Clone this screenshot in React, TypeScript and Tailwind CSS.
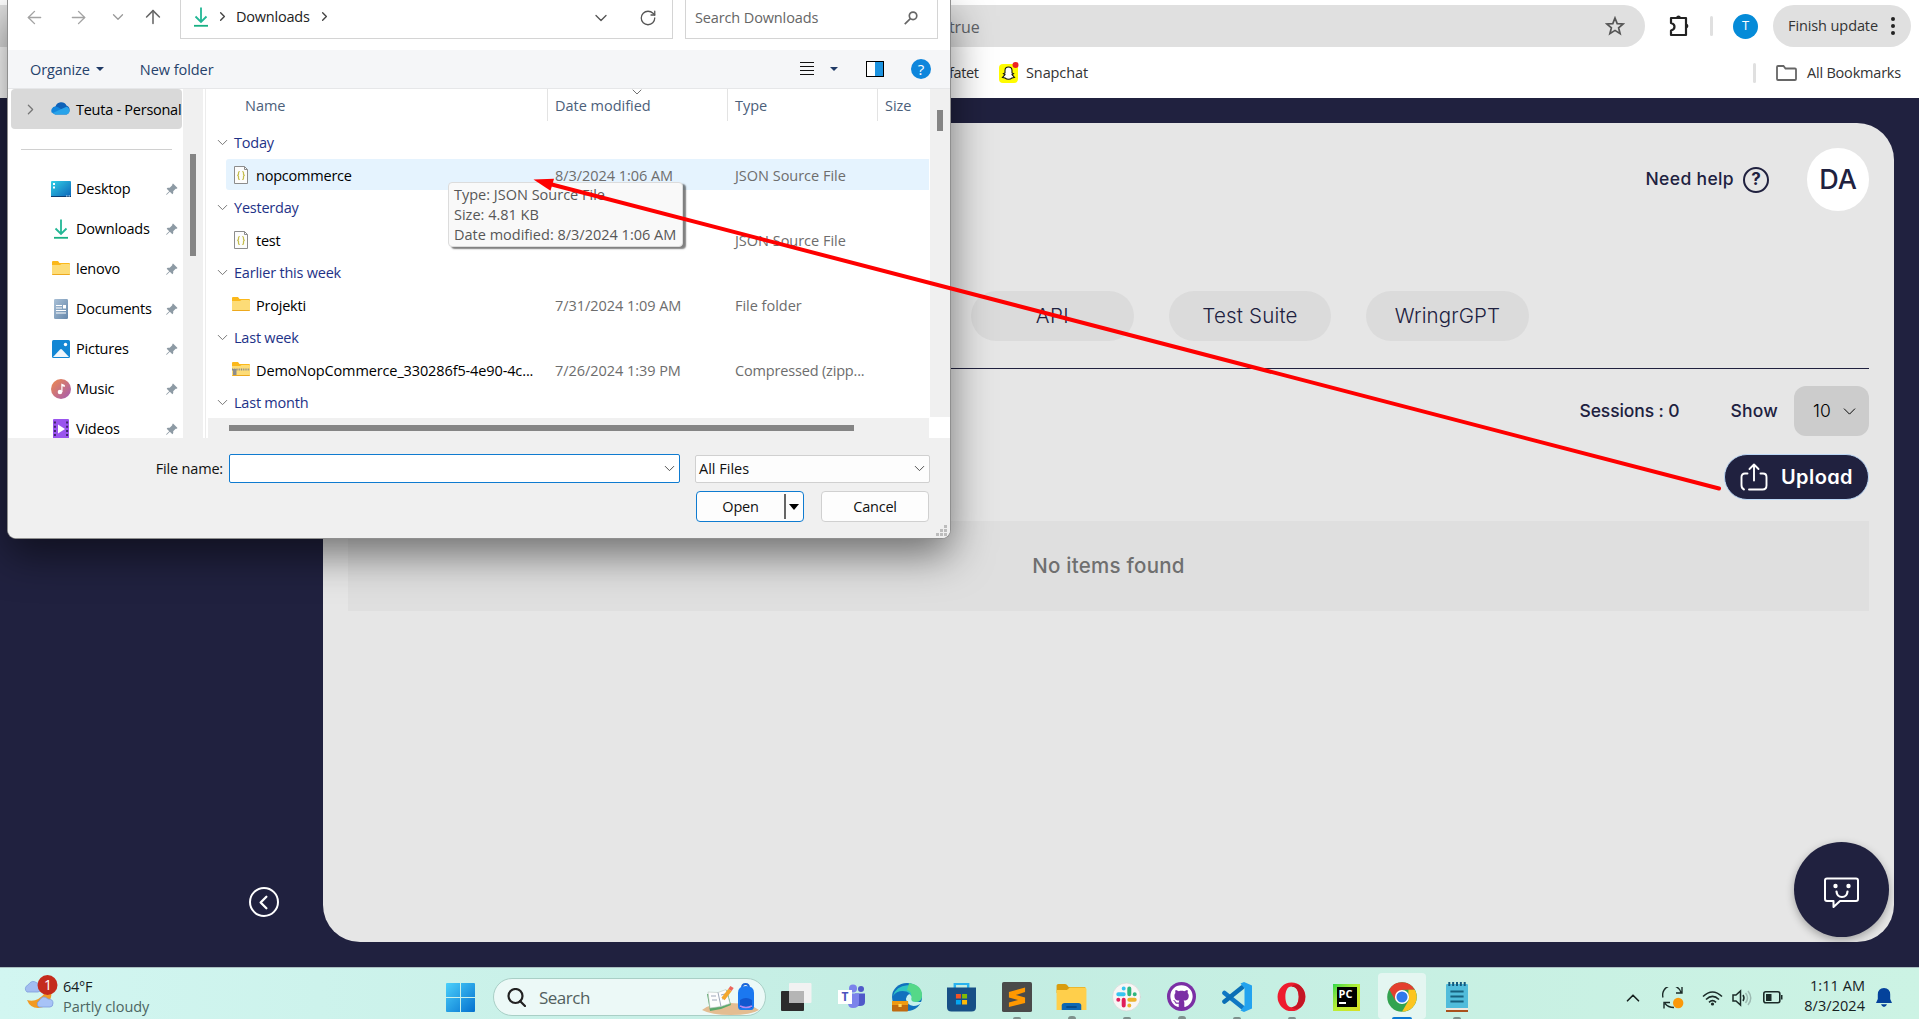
import React from "react";
import { ArrowLeft, ArrowRight, ArrowUp, ChevronDown, ChevronLeft, ChevronRight, ChevronUp, RotateCw } from "lucide-react";
import { BsPinAngleFill } from "react-icons/bs";
import { FaGithub } from "react-icons/fa";

function DownloadIcon() {
  return (
    <svg width="20" height="20" viewBox="0 0 20 20" fill="none" stroke="#1fb98f" strokeWidth="1.8">
      <path d="M10 0.5V14M4.5 9.5l5.5 5.5 5.5-5.5" stroke="#22b795" />
      <path d="M3 18.8h14" stroke="#18b083" />
    </svg>
  );
}

function FolderIcon({ zip = false }: { zip?: boolean }) {
  return (
    <svg width="20" height="20" viewBox="0 0 20 20">
      <path d="M1 3q0-1 1-1h5l1.5 2H18q1 0 1 1v10H1z" fill="#fbb81b" />
      <path d="M1 6h8l1.500-1H18q1 0 1 1v9q0 1-1 1H2q-1 0-1-1z" fill="#fddc77" />
      <path d="M1 15h18q0 1-1 1H2q-1 0-1-1z" fill="#eda91e" />
      {zip && (
        <>
          <path d="M1 9.500h18" stroke="#8a8a8a" strokeWidth="2" strokeDasharray="1 .8" />
          <rect x="2" y="9" width="3.500" height="6" fill="#8d8d8d" />
        </>
      )}
    </svg>
  );
}

function JsonIcon() {
  return (
    <svg width="14" height="18" viewBox="0 0 14 18" fill="none">
      <path d="M.5.5h10l3 3v14H.5z" fill="#fcfcfc" stroke="#8c8c8c" />
      <path d="M10.500.5v3h3" stroke="#8c8c8c" />
      <path d="M5.800 5.500q-1.300 0-1.300 1.300v1.500L3.700 9.300l.8 1v1.900q0 1.300 1.300 1.300M8.200 5.500q1.300 0 1.300 1.300v1.500l.8 1-.8 1v1.900q0 1.300-1.300 1.300" stroke="#c4bd4c" strokeWidth="1.200" />
    </svg>
  );
}

function CloudIcon() {
  return (
    <svg width="20" height="20" viewBox="0 0 20 20">
      <path d="M4.500 7.500A6 6 0 0 1 15.500 6.500a4.800 4.800 0 0 1 0 9H4.500a4.200 4.200 0 0 1 0-8z" fill="#0f62b8" />
      <path d="M1 14a4.200 4.200 0 0 1 3.500-6.500c2 0 4 1.500 6.500 3.500z" fill="#1285dc" />
      <path d="M1.500 14 11 9.800l4.500-2a4 4 0 0 1 0 7.700H4.500A4 4 0 0 1 1.500 14z" fill="#28a3ea" />
    </svg>
  );
}

function DesktopIcon() {
  return (
    <svg width="20" height="20" viewBox="0 0 20 20">
      <defs>
        <linearGradient id="desk" x2="1" y2="1">
          <stop stopColor="#33d0e6" />
          <stop offset="1" stopColor="#0b62b8" />
        </linearGradient>
      </defs>
      <rect y="2" width="20" height="16" rx="1" fill="url(#desk)" />
      <path d="M0 17h20v1H0z" fill="#0c3c71" />
      <path d="M2 4h2v2H2zM2 7.500h2v2H2z" fill="#fff" />
      <path d="M15 17h1.500M17.500 17h1.500" stroke="#fff" strokeWidth=".8" />
    </svg>
  );
}

function DocumentIcon() {
  return (
    <svg width="20" height="20" viewBox="0 0 20 20">
      <defs>
        <linearGradient id="doc" x2="1" y2="1">
          <stop stopColor="#a9c0d6" />
          <stop offset="1" stopColor="#6587ab" />
        </linearGradient>
      </defs>
      <rect x="3" width="14" height="20" rx="1.200" fill="url(#doc)" />
      <path d="M5 6.500h6M5 9h6M5 11.500h10M5 14h10" stroke="#fff" strokeWidth="1.200" />
      <rect x="12" y="6" width="3" height="3.500" fill="#fff" />
    </svg>
  );
}

function PicturesIcon() {
  return (
    <svg width="20" height="20" viewBox="0 0 20 20">
      <rect x="1" y="1" width="18" height="18" rx="1.500" fill="#1387d4" />
      <path d="m2 18 7-7.500q1-1 2 0l7 7.500z" fill="#f1f7fc" />
      <circle cx="14.500" cy="5.500" r="1.700" fill="#fff" />
    </svg>
  );
}

function MusicIcon() {
  return (
    <svg width="20" height="20" viewBox="0 0 20 20">
      <defs>
        <linearGradient id="mus" x2="1" y2="1">
          <stop stopColor="#f08a4b" />
          <stop offset="1" stopColor="#a35bb5" />
        </linearGradient>
      </defs>
      <circle cx="10" cy="10" r="10" fill="url(#mus)" />
      <circle cx="9" cy="13" r="2.300" fill="#fff" />
      <path d="M10.300 13V4.500l3.500 1.500v2l-2.300-.8V13z" fill="#fff" />
    </svg>
  );
}

function VideosIcon() {
  return (
    <svg width="20" height="20" viewBox="0 0 20 20">
      <rect x="2" y="0" width="16" height="20" rx="1" fill="#9a55ee" />
      <path d="M3.900 2.500V20M16.100 2.500V20" stroke="#3d2468" strokeWidth="2" strokeDasharray="2 2.200" />
      <path d="m7 5.500 7 4.500-7 4.500z" fill="#fff" />
    </svg>
  );
}

const places: { label: string; icon: React.ReactNode }[] = [
  { label: "Desktop", icon: <DesktopIcon /> },
  { label: "Downloads", icon: <DownloadIcon /> },
  { label: "lenovo", icon: <FolderIcon /> },
  { label: "Documents", icon: <DocumentIcon /> },
  { label: "Pictures", icon: <PicturesIcon /> },
  { label: "Music", icon: <MusicIcon /> },
  { label: "Videos", icon: <VideosIcon /> },
];

const groups = [
  { title: "Today", name: "nopcommerce", date: "8/3/2024 1:06 AM", type: "JSON Source File", icon: <JsonIcon />, active: true },
  { title: "Yesterday", name: "test", date: "8/3/2024 1:06 AM", type: "JSON Source File", icon: <JsonIcon /> },
  { title: "Earlier this week", name: "Projekti", date: "7/31/2024 1:09 AM", type: "File folder", icon: <FolderIcon /> },
  { title: "Last week", name: "DemoNopCommerce_330286f5-4e90-4c...", date: "7/26/2024 1:39 PM", type: "Compressed (zipp...", icon: <FolderIcon zip /> },
];

function GroupTitle({ title }: { title: string }) {
  return (
    <div className="flex h-[33px] items-center pl-[6px] tracking-[-0.22px] text-[#1e3287]">
      <ChevronDown className="mr-[3px] h-[17px] w-[17px] text-[#777]" strokeWidth={1.400} />
      {title}
    </div>
  );
}

function FileDialog() {
  return (
    <section className="absolute left-[7px] top-0 flex h-[539px] w-[944px] flex-col overflow-hidden rounded-b-[9px] border border-t-0 border-[#8f8f8f] bg-white text-[14.5px] tracking-[-0.22px] text-[#111] shadow-[0_16px_40px_rgba(0,0,0,0.5)]">
      <div className="flex h-[50px] shrink-0 text-[#555]">
        <div className="flex h-[34px] w-[172px] items-center">
          <ArrowLeft className="ml-[16px] h-[21px] w-[21px] text-[#a3a3a3]" strokeWidth={1.600} />
          <ArrowRight className="ml-[23px] h-[21px] w-[21px] text-[#a3a3a3]" strokeWidth={1.600} />
          <ChevronDown className="ml-[20px] h-[18px] w-[18px] text-[#999]" strokeWidth={1.700} />
          <ArrowUp className="ml-[15px] h-[22px] w-[22px] text-[#666]" strokeWidth={1.700} />
        </div>
        <div className="flex h-[39px] w-[493px] items-center border border-t-0 border-[#d4d4d4] pb-[5px] pl-[10px]">
          <DownloadIcon />
          <ChevronRight className="ml-[4px] h-[15px] w-[15px] text-[#444]" strokeWidth={2.200} />
          <span className="ml-[6px] text-[#222]">Downloads</span>
          <ChevronRight className="ml-[7px] h-[15px] w-[15px] text-[#444]" strokeWidth={2.200} />
          <ChevronDown className="ml-auto mr-[28px] mt-[3px] h-5 w-5" strokeWidth={1.600} />
          <RotateCw className="mr-[15px] mt-[3px] h-[18px] w-[18px]" strokeWidth={1.700} />
        </div>
        <div className="ml-[12px] flex h-[39px] w-[253px] items-center justify-between border border-t-0 border-[#d4d4d4] pb-[3px] pl-[9px] pr-[19px]">
          <span className="tracking-[-0.13px] text-[#666]">Search Downloads</span>
          <svg width="14" height="14" viewBox="0 0 15 15" fill="none" stroke="#666" strokeWidth="1.800">
            <circle cx="9.700" cy="5.200" r="4" />
            <path d="M6.800 8.200.8 14" />
          </svg>
        </div>
      </div>

      <div className="flex h-[39px] shrink-0 items-center border-b border-[#e6e7e9] bg-[#f5f6f8] text-[#26426b]">
        <span className="ml-[22px] mt-[2px] tracking-[-0.1px]">Organize</span>
        <span className="ml-[6px] border-x-4 border-t-4 border-x-transparent border-t-[#203a66]" />
        <span className="ml-[36px] mt-[2px] tracking-[-0.05px]">New folder</span>
        <svg className="ml-auto" width="14" height="14" viewBox="0 0 14 14" stroke="#111" strokeWidth="1">
          <path d="M0 .5h14M0 4.500h14M0 8.500h14M0 12.500h14" />
        </svg>
        <span className="ml-[16px] border-x-4 border-t-4 border-x-transparent border-t-[#203a66]" />
        <span className="ml-[28px] flex h-[16px] w-[18px] justify-end border border-black bg-white">
          <span className="w-2 bg-[#1c93e0]" />
        </span>
        <span className="ml-[27px] mr-[19px] flex h-5 w-5 items-center justify-center rounded-full bg-[#0e86dc] text-[15px] text-white">?</span>
      </div>

      <div className="flex h-[349px] shrink-0">
        <div className="h-full w-[175px] shrink-0 overflow-hidden pl-[3px] text-black">
          <div className="flex h-10 w-[171px] items-center overflow-hidden whitespace-nowrap rounded-sm bg-[#d9d9d9]">
            <ChevronRight className="ml-[11px] h-[17px] w-[17px] shrink-0 text-[#777]" strokeWidth={1.800} />
            <span className="ml-[12px] mr-[5px] shrink-0"><CloudIcon /></span>
            <span className="mt-px tracking-[-0.26px]">Teuta - Personal</span>
          </div>
          <div className="ml-[10px] mt-5 h-px w-[151px] bg-[#d0d0d0]" />
          <div className="mt-[19px]">
            {places.map((p) => (
              <div key={p.label} className="flex h-10 items-center pl-10">
                {p.icon}
                <span className="ml-[5px]">{p.label}</span>
                <BsPinAngleFill className="ml-auto mr-[5px] h-[13px] w-[13px] text-[#8d9aa4]" />
              </div>
            ))}
          </div>
        </div>
        <div className="h-full w-[20px] shrink-0 bg-[#f0f0f0] pl-[7px] pt-[65px]">
          <div className="h-[102px] w-[6px] bg-[#858585]" />
        </div>
        <div className="ml-[2px] h-full w-[3px] border-l border-[#ececec]" />
        <div className="flex h-full w-[722px] shrink-0 flex-col">
          <div className="relative flex h-8 items-center tracking-[-0.02px] text-[#4c607a]">
            <span className="ml-[37px] mt-[2px] w-[302px]">Name</span>
            <span className="flex h-full w-[180px] items-center border-l border-[#e3e3e3] pl-[7px] pt-[2px]">Date modified</span>
            <span className="flex h-full w-[150px] items-center border-l border-[#e3e3e3] pl-[7px] pt-[2px]">Type</span>
            <span className="flex h-full items-center border-l border-[#e3e3e3] pl-[7px] pt-[2px]">Size</span>
            <ChevronDown className="absolute left-[421px] top-[-5px] h-[16px] w-[16px] text-[#666]" strokeWidth={1.400} />
          </div>
          <div className="mt-[5px] h-[292px] overflow-hidden">
            {groups.map((g) => (
              <div key={g.title} className="h-[65px]">
                <GroupTitle title={g.title} />
                <div className={g.active ? "ml-[18px] flex h-[31px] w-[703px] items-center rounded-l-[3px] bg-[#e5f3fe]" : "ml-[18px] flex h-[31px] w-[703px] items-center"}>
                  <span className="ml-[5px] flex w-5 justify-center">{g.icon}</span>
                  <span className={g.name.length > 20 ? "ml-[5px] mt-[2px] w-[299px] whitespace-nowrap tracking-[-0.12px] text-black" : "ml-[5px] mt-[2px] w-[299px] text-black"}>{g.name}</span>
                  <span className="mt-[2px] w-[180px] tracking-[-0.05px] text-[#6d6d6d]">{g.date}</span>
                  <span className={g.type.length > 16 ? "mt-[2px] whitespace-nowrap tracking-[-0.17px] text-[#6d6d6d]" : "mt-[2px] whitespace-nowrap tracking-[-0.02px] text-[#6d6d6d]"}>{g.type}</span>
                </div>
              </div>
            ))}
            <GroupTitle title="Last month" />
          </div>
          <div className="mt-auto flex h-5 w-[721px] items-center bg-[#f0f0f0] pl-[21px]">
            <div className="h-[6px] w-[625px] bg-[#858585]" />
          </div>
        </div>
        <div className="h-[328px] w-[20px] bg-[#f0f0f0] pl-[7px] pt-[21px]">
          <div className="h-[21px] w-[6px] bg-[#858585]" />
        </div>
      </div>

      <div className="flex flex-1 flex-col bg-[#f0f0f0] pt-4">
        <div className="flex h-[29px] items-center">
          <span className="w-[215px] text-right tracking-[-0.18px]">File name:</span>
          <span className="ml-[6px] flex h-[29px] w-[451px] items-center justify-end rounded-[2px] border border-[#0f7bd0] bg-white pr-px">
            <ChevronDown className="h-[17px] w-[17px] text-[#444]" strokeWidth={1.300} />
          </span>
          <span className="ml-[15px] flex h-7 w-[235px] items-center justify-between rounded-[2px] border border-[#d0d0d0] bg-[#fdfdfd] pl-[3px] pr-px tracking-[0px]">
            All Files
            <ChevronDown className="h-[17px] w-[17px] text-[#444]" strokeWidth={1.300} />
          </span>
        </div>
        <div className="mt-[8px] flex h-[31px] pl-[688px]">
          <span className="flex w-[108px] items-center rounded-[4px] border border-[#0f7bd0] bg-[#fdfdfd]">
            <span className="w-[87px] text-center">Open</span>
            <span className="h-[25px] w-[2px] bg-[#666]" />
            <span className="ml-[3px] border-x-[5px] border-t-[6px] border-x-transparent border-t-black" />
          </span>
          <span className="ml-[17px] flex w-[108px] items-center justify-center rounded-[4px] border border-[#d0d0d0] bg-[#fdfdfd]">Cancel</span>
        </div>
        <svg className="ml-auto mr-[2px] mt-[3px]" width="12" height="12" viewBox="0 0 12 12" fill="#bdbdbd">
          <path d="M8 0h3v3H8zM4 4h3v3H4zM8 4h3v3H8zM0 8h3v3H0zM4 8h3v3H4zM8 8h3v3H8z" />
        </svg>
      </div>
    </section>
  );
}

function BrowserChrome() {
  return (
    <header className="h-[98px] shrink-0 bg-white text-[14.5px] tracking-[-0.1px] text-[#333]">
      <div className="flex h-[52px] items-center">
        <div className="flex h-[42px] w-[1645px] items-center justify-between rounded-r-full bg-[#e0e0e0] pl-[949px] pr-[20px] text-[16px] text-[#5f6368]">
          <span className="mt-px">true</span>
          <svg width="20" height="20" viewBox="0 0 20 20" fill="none" stroke="#555" strokeWidth="1.700">
            <path d="m10 2 2.200 5.600 6 .4-4.600 3.800 1.500 5.900L10 14.400l-5.100 3.300 1.500-5.900L1.800 8l6-.4z" />
          </svg>
        </div>
        <svg className="ml-[23px]" width="23" height="22" viewBox="0 0 23 22" fill="none" stroke="#222" strokeWidth="2.200">
          <path d="M3 3h15v17H3v-4.500q3.500-1 3.500-3.800T3 8z" strokeLinejoin="round" />
          <path d="M8 2.500a2.600 2.600 0 0 1 5 0zM18.500 8.500a2.600 2.600 0 0 1 0 5z" fill="#222" strokeWidth="0" />
        </svg>
        <span className="ml-[19px] h-5 w-[3px] rounded bg-[#e0e0e0]" />
        <span className="ml-5 flex h-[25px] w-[25px] items-center justify-center rounded-full bg-[#058bd8] text-[13px] text-white">T</span>
        <div className="ml-[15px] flex h-[42px] w-[138px] items-center rounded-full bg-[#e0e0e0] pl-[15px] text-[14.5px] text-[#333]">
          <span className="whitespace-nowrap">Finish update</span>
          <svg className="ml-[13px] shrink-0" width="4" height="18" viewBox="0 0 4 18" fill="#222">
            <circle cx="2" cy="2" r="2" /><circle cx="2" cy="9" r="2" /><circle cx="2" cy="16" r="2" />
          </svg>
        </div>
      </div>
      <div className="flex h-[42px] items-center pl-[949px]">
        <span className="w-[50px] tracking-[-0.35px]">fatet</span>
        <svg width="20" height="22" viewBox="0 0 20 22">
          <rect y="2" width="19" height="19" rx="4" fill="#fffc00" />
          <path d="M9.500 5q3.500 0 3.500 3.500V11l1.500.7-1.500 1 2.500 2.800-2.500.5q-1.500 1.300-3.500 1.300T6 16l-2.500-.5L6 12.700l-1.500-1L6 11V8.500Q6 5 9.500 5z" fill="#fff" stroke="#111" strokeWidth="1.100" />
          <circle cx="16.500" cy="3" r="3" fill="#e22" />
        </svg>
        <span className="ml-[7px]">Snapchat</span>
        <span className="ml-auto h-5 w-[3px] rounded bg-[#e0e0e0]" />
        <svg className="ml-5" width="21" height="16" viewBox="0 0 21 16" fill="none" stroke="#666" strokeWidth="1.800">
          <path d="M1 2q0-1 1-1h5.500l2 2.500H19q1 0 1 1V14q0 1-1 1H2q-1 0-1-1z" />
        </svg>
        <span className="ml-[10px] mr-[18px] tracking-[-0.2px]">All Bookmarks</span>
      </div>
    </header>
  );
}

function Workspace() {
  return (
    <main className="flex h-[869px] shrink-0 bg-[#20213f] font-['Inter',sans-serif] text-[#20213f] [font-feature-settings:'cv11']">
      <aside className="flex w-[323px] flex-col justify-end">
        <span className="mb-[50px] ml-[249px] flex h-[30px] w-[30px] items-center justify-center rounded-full border-2 border-white text-white">
          <ChevronLeft className="mr-[2px] h-[23px] w-[23px]" strokeWidth={2.400} />
        </span>
      </aside>
      <section className="relative mb-[25px] mt-[25px] flex w-[1571px] flex-col rounded-[37px] bg-[#e6e6e6] px-[25px]">
        <div className="mt-[25px] flex h-[63px] items-center justify-end font-medium">
          <span className="text-[17.5px] tracking-[0.350px]">Need help</span>
          <span className="ml-[9px] flex h-[26px] w-[26px] items-center justify-center rounded-full border-2 border-[#20213f] text-[17px] font-bold">?</span>
          <span className="ml-[38px] flex h-[63px] w-[62px] items-center justify-center rounded-full bg-white pt-[2px] text-[27px]">DA</span>
        </div>
        <div className="mt-20 flex gap-[35px] pl-[623px] text-[20.5px] font-light tracking-[0.400px]">
          <span className="flex h-[50px] w-[163px] shrink-0 items-center justify-center rounded-full bg-[#dbdbdb]">API</span>
          <span className="flex h-[50px] w-[162px] shrink-0 items-center justify-center rounded-full bg-[#dbdbdb]">
            <span className="tracking-[0.200px]">Test Suite</span>
          </span>
          <span className="flex h-[50px] w-[163px] shrink-0 items-center justify-center rounded-full bg-[#dbdbdb]">
            <span className="tracking-[0.100px]">WringrGPT</span>
          </span>
        </div>
        <div className="mt-[27px] h-px bg-[#20213f]" />
        <div className="mt-[17px] flex h-[50px] items-center justify-end text-[17.5px] font-medium">
          <span className="tracking-[-0.1px]">Sessions : 0</span>
          <span className="ml-[51px] tracking-[0.2px]">Show</span>
          <span className="ml-4 flex h-[50px] w-[75px] items-center rounded-xl bg-[#cccccc] pl-[19px] font-light text-black">
            10
            <ChevronDown className="ml-[8px] h-[21px] w-[21px]" strokeWidth={1.100} />
          </span>
        </div>
        <div className="mt-[18px] flex justify-end">
          <span className="flex h-[46px] w-[145px] items-center rounded-full border border-[#bcd7f5] bg-[#20213f] pl-[15px] text-[20px] font-semibold tracking-[0.400px] text-white">
            <svg width="28" height="28" viewBox="0 0 28 28" fill="none" stroke="#fff" strokeWidth="1.900" strokeLinecap="round" strokeLinejoin="round">
              <path d="M14 17.500V1.500M9.500 6 14 1.500 18.500 6M7.500 10.500H5Q1.500 10.500 1.500 14v8q0 3.500 2.500 4.500M20.500 10.500H23q3.500 0 3.500 3.500v8.500q0 4-4 4H9" />
            </svg>
            <span className="ml-[13px]">Upload</span>
          </span>
        </div>
        <div className="mt-[21px] flex h-[90px] items-center justify-center bg-[#dfdfdf] text-[20.5px] font-medium tracking-[0.250px] text-[#6f6f6f]">No items found</div>
        <button className="absolute bottom-[5px] right-[5px] flex h-[95px] w-[95px] items-center justify-center rounded-full bg-[#20213f] shadow-[0_3px_8px_rgba(0,0,0,0.3)]">
          <svg className="mt-[6px]" width="36" height="32" viewBox="0 0 36 32" fill="none" stroke="#fff" strokeWidth="2" strokeLinejoin="round" strokeLinecap="round">
            <path d="M3 1.500h29q2 0 2 2V22q0 2-2 2H16l-6.500 6v-6H3q-2 0-2-2V3.500q0-2 2-2z" />
            <path d="M12.500 14.500q.5 5.500 5.500 5.500t5.500-5.500" strokeWidth="2.200" />
            <circle cx="11.500" cy="9" r="1.200" fill="#fff" /><circle cx="24.500" cy="9" r="1.200" fill="#fff" />
          </svg>
        </button>
      </section>
    </main>
  );
}

function WeatherIcon() {
  return (
    <svg width="36" height="36" viewBox="0 0 36 36">
      <path d="M22 19q8-2 6 4-2 11-13 11-8 0-11-8 10 3 18-7z" fill="#f29a22" />
      <path d="M4 18a4 4 0 0 1 1-7q4-6 9-2 4 0 4 5 0 4-3 4z" fill="#a2bdf0" stroke="#7f9ddd" strokeWidth=".8" />
      <path d="M16 33a3.500 3.500 0 0 1 0-6q4-7 9-2 5 0 5 4 0 4-3 4z" fill="#a7c3f7" stroke="#7f9ddd" strokeWidth=".8" />
      <circle cx="24.500" cy="11" r="10" fill="#c42b1c" />
    </svg>
  );
}

const apps: { id: string; open?: boolean; focus?: boolean; icon: React.ReactNode }[] = [
  {
    id: "edge",
    icon: (
      <svg width="30" height="30" viewBox="0 0 28 30" preserveAspectRatio="none">
        <circle cx="14" cy="15" r="14" fill="#1171be" />
        <path d="M1 14A14 14 0 0 1 28 13q0 7-6 7-5 0-4-3Q18 9 10 9 4 9 1 14z" fill="#2fc4c4" />
        <path d="M16 1q12 2 12 12 0 7-6 7-5 0-4-3Q19 9 14 8z" fill="#55d888" />
        <path d="M28 20q-3 4-8 4-6-1-7-7 0-3 3-5 3 2 2 5 0 3 4 3t6 0z" fill="#c7f1ec" />
        <rect y="19" width="15" height="10.500" rx="1" fill="#c06b10" />
        <path d="M0 19h15v4H0z" fill="#ee9a12" /><rect x="6" y="22" width="3" height="3" fill="#ffda63" />
      </svg>
    ),
  },
  {
    id: "store",
    icon: (
      <svg width="29" height="30" viewBox="0 0 26 30" preserveAspectRatio="none">
        <path d="M7 6V2h12v4" fill="none" stroke="#29b2ef" strokeWidth="2.200" />
        <path d="M0 5.500h26V25q0 4.500-4 4.500H4q-4 0-4-4.500z" fill="#174f86" />
        <path d="M8 12h4.500v4.500H8z" fill="#f35325" /><path d="M13.500 12H18v4.500h-4.500z" fill="#81bc06" />
        <path d="M8 18h4.500v4.500H8z" fill="#05a6f0" /><path d="M13.500 18H18v4.500h-4.500z" fill="#ffba08" />
      </svg>
    ),
  },
  {
    id: "sublime",
    open: true,
    icon: (
      <svg width="30" height="30" viewBox="0 0 26 30" preserveAspectRatio="none">
        <rect width="26" height="30" rx="1.500" fill="#4a4a4a" />
        <path d="M6 10 20 5.500V10l-8 3 8 2.500V21L6 25v-4.500l8-2.500-8-2.500z" fill="#ff9800" />
      </svg>
    ),
  },
  {
    id: "explorer",
    open: true,
    icon: (
      <svg width="31" height="28" viewBox="0 0 27 28" preserveAspectRatio="none">
        <path d="M.5 2.500Q.5 1 2 1h6q1.500 0 3 3h14.500v6H.5z" fill="#d99c0e" />
        <path d="M.5 7h9l2.500-2.500h13q1.500 0 1.500 1.500v21h-26z" fill="#ffcf4b" />
        <path d="M5 27v-4.500q0-2.500 2.500-2.500h12q2.500 0 2.500 2.500V27z" fill="#0e68b3" />
        <path d="M9 24h9" stroke="#07437d" strokeWidth="1.500" />
      </svg>
    ),
  },
  {
    id: "slack",
    open: true,
    icon: (
      <svg width="29" height="30" viewBox="0 0 29 30" strokeLinecap="round" strokeWidth="4">
        <circle cx="14.500" cy="15" r="14" fill="#f8f6f5" stroke="#ccc" strokeWidth=".5" />
        <path d="M11.700 6.500h.01M6.300 12.200h5.400" stroke="#36c5f0" /><path d="M17.300 6.500v5.700M22.700 12.200h.01" stroke="#2eb67d" />
        <path d="M17.300 17.800h5.400M17.300 23.500h.01" stroke="#ecb22e" /><path d="M6.300 17.800h.01M11.700 17.800v5.700" stroke="#e01e5a" />
      </svg>
    ),
  },
  {
    id: "github",
    open: true,
    icon: (
      <span className="flex h-[29px] w-[29px] items-center justify-center rounded-full bg-[#7b2fa5] text-[23px] text-white">
        <FaGithub />
      </span>
    ),
  },
  {
    id: "vscode",
    open: true,
    icon: (
      <svg width="30" height="30" viewBox="0 0 30 30">
        <path d="M2.500 11 20 25" stroke="#0f78c4" strokeWidth="4.600" strokeLinecap="round" />
        <path d="M2.500 19.500 20 5.500" stroke="#0a6fb6" strokeWidth="4.600" strokeLinecap="round" />
        <path d="M22 0 30 3.500v23L22 30l-3.500-1.500 4-5V6.500l-4-5z" fill="#23a3ef" />
      </svg>
    ),
  },
  {
    id: "opera",
    open: true,
    icon: (
      <svg width="29" height="30" viewBox="0 0 26 30" preserveAspectRatio="none">
        <path fillRule="evenodd" d="M13 .5a12.500 14.300 0 0 1 0 28.600A12.500 14.300 0 0 1 13 .5zm0 4c-4 0-5.500 5-5.500 10.300S9 25.200 13 25.200s6.500-4.500 6.500-10.400S17 4.500 13 4.500z" fill="#ee1c2e" />
        <path d="M13 4.500Q17 .5 21 4a12.500 14.300 0 0 1 0 21.500q-4 3-8-.3 6.500 0 6.500-10.400T13 4.500z" fill="#c41624" />
      </svg>
    ),
  },
  {
    id: "pycharm",
    icon: (
      <span className="flex h-[27px] w-[27px] items-center justify-center bg-gradient-to-br from-[#21d748] via-[#b8ef35] to-[#d9e021]">
        <span className="flex h-[20px] w-[20px] flex-col bg-black pl-[2px] font-['Open_Sans',sans-serif] text-[11px] font-bold leading-[13px] tracking-normal text-white">
          PC
          <span className="mt-[2px] h-[2px] w-[7px] bg-white" />
        </span>
      </span>
    ),
  },
  {
    id: "chrome",
    focus: true,
    icon: (
      <svg width="30" height="30" viewBox="0 0 28 28">
        <circle cx="14" cy="14" r="13.800" fill="#33a350" />
        <path d="M14 .2A13.800 13.800 0 0 1 26 7.200H14L8 17.500 2.100 7A13.800 13.800 0 0 1 14 .2z" fill="#e3402f" />
        <path d="M26 7.200A13.800 13.800 0 0 1 14 27.800L20 17.500l0-10.300z" fill="#fcc520" />
        <circle cx="14" cy="14" r="6.600" fill="#fff" /><circle cx="14" cy="14" r="5.200" fill="#2f79ec" />
      </svg>
    ),
  },
  {
    id: "notepad",
    open: true,
    icon: (
      <svg width="22" height="30" viewBox="0 0 20 30" preserveAspectRatio="none">
        <rect x="0" y="2" width="20" height="26" rx="1" fill="#51bcdb" />
        <path d="M0 26h20v2H0z" fill="#f0e8e0" /><path d="M0 28h20v2H0z" fill="#a9511c" />
        <path d="M3 0v4M6.500 0v4M10 0v4M13.500 0v4M17 0v4" stroke="#14587d" strokeWidth="1.800" />
        <path d="M4 9.500h12M4 14.500h12M4 19.500h12" stroke="#17617f" strokeWidth="1.800" />
      </svg>
    ),
  },
];

function Taskbar() {
  return (
    <footer className="relative flex h-[52px] shrink-0 border-t border-[#a9bfc0] bg-gradient-to-r from-[#d2f6f1] via-[#c3ede2] to-[#ccf3e4] text-[14.5px] tracking-[-0.25px] text-[#16211f]">
      <div className="relative ml-[23px] mt-[6px] flex w-[423px]">
        <WeatherIcon />
        <span className="absolute left-[20px] top-[1px] w-[10px] text-center text-[14px] leading-5 text-white">1</span>
        <div className="ml-[4px] mt-[3px] leading-5">
          <div>64°F</div>
          <div className="tracking-[-0.05px] text-[#4d6662]">Partly cloudy</div>
        </div>
      </div>
      <svg className="mt-[15px]" width="29" height="29" viewBox="0 0 29 29">
        <defs>
          <linearGradient id="win" x2="1" y2="1"><stop stopColor="#4bd0fb" /><stop offset="1" stopColor="#0471cf" /></linearGradient>
        </defs>
        <path d="M0 1q0-1 1-1h13v14H0zM15 0h13q1 0 1 1v13H15zM0 15h14v14H1q-1 0-1-1zM15 15h14v13q0 1-1 1H15z" fill="url(#win)" />
      </svg>
      <div className="ml-[18px] mt-[10px] flex h-[38px] w-[273px] items-center rounded-full border border-[#a9cfc6] bg-[#ecf9f7] pl-[13px] text-[17px] text-[#52605e]">
        <svg width="19" height="19" viewBox="0 0 19 19" fill="none" stroke="#222" strokeWidth="2.200">
          <circle cx="8.500" cy="8" r="7" /><path d="m13 13 5 5" strokeLinecap="round" />
        </svg>
        <span className="ml-[13px] mt-[2px] tracking-[-0.5px]">Search</span>
        <svg className="ml-auto mr-[6px] mt-[3px]" width="57" height="32" viewBox="0 0 57 32">
          <path d="M0 27q8-7 28-7t29 7q-8 5-28 5T0 27z" fill="#e3bd91" />
          <path d="m5 11 11-1 9-3 4 15-10 4-11 2z" fill="#5ba869" />
          <path d="m6 9 10 .5 8-3 4 14-9 3-11 1.500z" fill="#fdfdfd" stroke="#b9c6c0" strokeWidth=".6" />
          <path d="m16 9.500 3 14M9 13l5 0M10 17h5M19 12l4-1M20 16l4-1" stroke="#9fa9ba" />
          <path d="m21 16 7-9" stroke="#f4a72c" strokeWidth="4" /><path d="m28 7 2-3" stroke="#ed665c" strokeWidth="4" />
          <path d="M40 5q0-4 3.500-4T47 5" stroke="#1c66d8" strokeWidth="2" fill="none" />
          <path d="M36 10q0-7 8-7t8 7v13q0 4-3 4H39q-3 0-3-4z" fill="#1b78f0" />
          <path d="M38 17q6-4 12 0v8H38z" fill="#1257cf" /><path d="M38 23q6 3 12 0" stroke="#b58af0" strokeWidth="1.500" fill="none" />
        </svg>
      </div>
      <svg className="ml-[15px] mt-[15px]" width="31" height="28" viewBox="0 0 31 28">
        <rect y="8" width="23" height="20" rx="1" fill="#2c2c2c" />
        <rect x="8" width="22.500" height="20" rx="1" fill="#f2f2f2" />
        <rect x="8" y="8" width="15" height="12" fill="#b5b5b5" />
      </svg>
      <div className="relative ml-[26px] mt-[16px] h-[27px] w-[28px]">
        <svg width="28" height="26" viewBox="0 0 28 26">
          <circle cx="15" cy="4.500" r="4" fill="#7b83eb" /><circle cx="23" cy="5" r="3" fill="#5059c9" />
          <path d="M17 9.500h10V18q0 4-5 4h-5z" fill="#5059c9" />
          <path d="M10 9.500h11V19q0 5-6 5-5 0-5-5z" fill="#7b83eb" />
          <rect y="6" width="14" height="14" fill="#fff" />
        </svg>
        <span className="absolute left-0 top-[6px] w-[14px] text-center text-[12px] font-bold leading-[14px] tracking-normal text-[#4a52bd]">T</span>
      </div>
      <div className="ml-[13px] flex">
        {apps.map((a) => (
          <div key={a.id} className="flex h-[51px] w-[55px] shrink-0 flex-col items-center">
            <div className={a.focus ? "mt-[5px] flex h-[46px] w-[48px] flex-col items-center rounded-[4px] bg-[#e4f6f1]" : "mt-[5px] flex h-[46px] w-[48px] flex-col items-center"}>
              <div className="mt-[9px] flex h-[30px] items-center">{a.icon}</div>
              {a.open && <span className="mt-[5px] h-[3px] w-[8px] rounded-t bg-[#7d918c]" />}
              {a.focus && <span className="mt-[5px] h-[3px] w-[20px] rounded-t bg-[#0a78d4]" />}
            </div>
          </div>
        ))}
      </div>
      <div className="ml-auto flex h-[51px] items-center pt-[8px]">
        <ChevronUp className="h-[22px] w-[22px]" strokeWidth={1.800} />
        <svg className="ml-[18px]" width="22" height="22" viewBox="0 0 22 22" fill="none" stroke="#1b2b28" strokeWidth="1.400">
          <path d="M1 10.500A9 9 0 0 1 19 5.500M20 0v6h-6M3 16.500q3 4 9 4M2 21.500v-6h6" />
          <circle cx="16.200" cy="16" r="5.200" fill="#fb9809" stroke="none" />
        </svg>
        <svg className="ml-[18px]" width="21" height="16" viewBox="0 0 21 16" fill="none" stroke="#1b2b28" strokeWidth="1.600">
          <path d="M1 6.500q9.500-9 19 0M4 9.500q6.500-6.200 13 0M7 12.300q3.500-3.200 7 0" /><circle cx="10.500" cy="14" r="1.600" fill="#1b2b28" stroke="none" />
        </svg>
        <svg className="ml-[9px]" width="21" height="18" viewBox="0 0 21 18" fill="none" stroke="#1b2b28" strokeWidth="1.500">
          <path d="M1 6h3l4.500-4v14L4 12H1zM11 6q2 3 0 6" /><path d="M13.500 4q4 5 0 10M16 2q5.500 7 0 14" stroke="#9dbab2" />
        </svg>
        <svg className="ml-[10px]" width="20" height="13" viewBox="0 0 20 13" fill="none" stroke="#1b2b28" strokeWidth="1.600">
          <rect x=".8" y=".8" width="16" height="11" rx="2" /><path d="M3 3h5.500v7H3zM18 4h1.500v4.500H18z" fill="#1b2b28" stroke="none" />
        </svg>
        <div className="ml-[18px] mt-[-3px] w-[64px] whitespace-nowrap text-right leading-5 tracking-[0.050px]">
          <div>1:11 AM</div>
          <div>8/3/2024</div>
        </div>
        <svg className="ml-[11px] mr-[27px]" width="16" height="19" viewBox="0 0 16 19" fill="#04429b">
          <path d="M8 0q6 0 6.200 6.500V11l1.800 4H0l1.800-4V6.500Q2 0 8 0zM5 16.300h6Q10 19 8 19t-3-2.700z" />
        </svg>
      </div>
    </footer>
  );
}

export default function App() {
  return (
    <div className="relative flex h-[1019px] w-[1919px] flex-col overflow-hidden font-['Open_Sans',sans-serif]">
      <BrowserChrome />
      <Workspace />
      <Taskbar />
      <FileDialog />
      <aside className="absolute left-[448px] top-[182px] h-[65px] w-[235px] whitespace-nowrap rounded-[4px] border border-[#dcdcdc] bg-[#f9f9f9] pl-[5px] pt-[2px] text-[14.5px] leading-5 tracking-[0px] text-[#575757] shadow-[3px_2px_1.500px_rgba(0,0,0,0.5)]">
        <div>Type: JSON Source File</div>
        <div>Size: 4.81 KB</div>
        <div>Date modified: 8/3/2024 1:06 AM</div>
      </aside>
      <svg className="pointer-events-none absolute left-0 top-0" width="1919" height="1019" viewBox="0 0 1919 1019">
        <path d="M548 183.500 1719 488.500" stroke="#fe0000" strokeWidth="4" strokeLinecap="round" />
        <path d="M533.500 179.500 554 178.700 550.500 190.800z" fill="#fe0000" />
      </svg>
    </div>
  );
}
